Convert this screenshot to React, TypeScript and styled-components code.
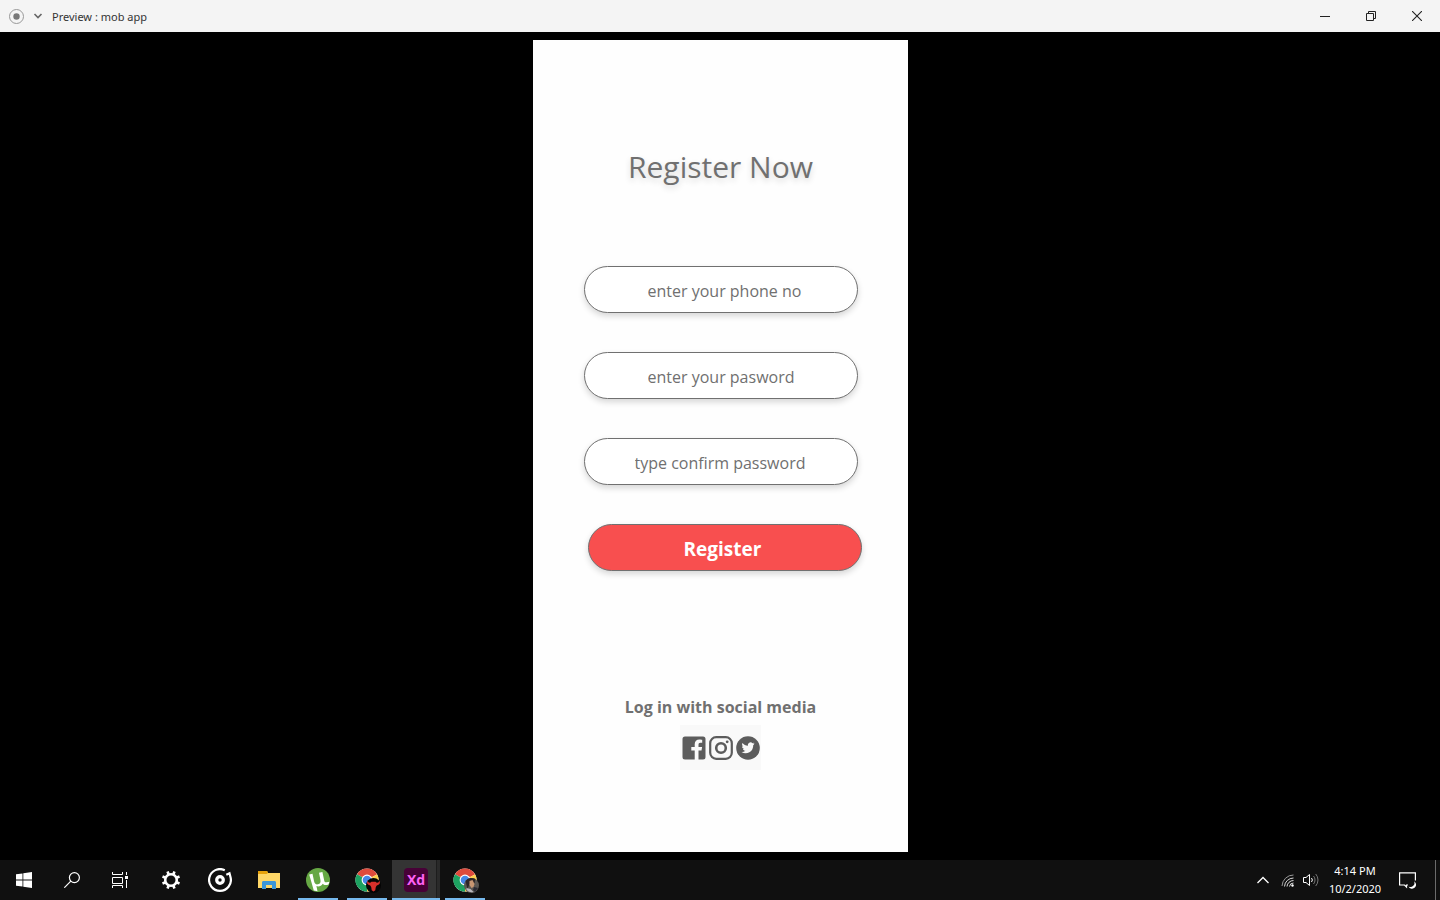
import React from 'react';
import styled, { createGlobalStyle } from 'styled-components';

const GlobalStyle = createGlobalStyle`
  * { box-sizing: border-box; }
  body {
    margin: 0;
    background: #000;
    font-family: "Open Sans", "Noto Sans", sans-serif;
  }
  button, input { font-family: inherit; }
`;

const Desktop = styled.div`
  display: flex;
  flex-direction: column;
  min-height: 100vh;
`;

const TitleBar = styled.header`
  display: flex;
  align-items: center;
  height: 32px;
  padding-left: 8px;
  background: #f4f4f4;
`;

const IconButton = styled.button<{ $width: number }>`
  display: flex;
  align-items: center;
  justify-content: center;
  width: ${(p) => p.$width}px;
  height: 100%;
  padding: 0;
  border: 0;
  background: transparent;
`;

const WindowTitle = styled.span`
  flex: 1;
  padding: 2px 0 0 1px;
  color: #333;
  font-family: "Noto Sans", sans-serif;
  font-size: 11px;
  line-height: 16px;
`;

const Stage = styled.main`
  display: flex;
  flex: 1;
  justify-content: center;
  padding: 8px;
  background: #000;
`;

const Artboard = styled.section`
  display: flex;
  flex-direction: column;
  align-items: center;
  width: 100%;
  max-width: 375px;
  padding: 105px 50px 82px 51px;
  background: #fefefe;
  color: #707070;
`;

const Heading = styled.h1`
  margin: 0;
  font-size: 30px;
  font-weight: 400;
  line-height: 44px;
  text-shadow: 0 3px 6px rgba(0, 0, 0, 0.16);
`;

const Form = styled.form`
  display: flex;
  flex-direction: column;
  gap: 39px;
  width: 100%;
  max-width: 274px;
  margin-top: 77px;
`;

const Field = styled.input<{ $indent: number }>`
  width: 100%;
  height: 47px;
  padding: 2px 16px 0 ${(p) => p.$indent}px;
  border: 1px solid #707070;
  border-radius: 24px;
  background: #fff;
  box-shadow: 0 3px 6px rgba(0, 0, 0, 0.16);
  color: #707070;
  font-size: 16px;
  &::placeholder { color: #707070; opacity: 1; }
`;

const Submit = styled.button`
  width: 100%;
  height: 47px;
  margin-left: 4px;
  padding: 2px 4px 0 0;
  border: 1px solid #707070;
  border-radius: 24px;
  background: #f84f4f;
  box-shadow: 0 3px 6px rgba(0, 0, 0, 0.16);
  color: #fff;
  font-size: 19px;
  font-weight: 700;
`;

const Social = styled.div`
  display: flex;
  flex-direction: column;
  align-items: center;
  gap: 6px;
  margin-top: auto;
`;

const SocialTitle = styled.h2`
  margin: 0;
  font-size: 16px;
  font-weight: 700;
  line-height: 24px;
  white-space: nowrap;
`;

const SocialLinks = styled.nav`
  display: flex;
  align-items: center;
  justify-content: center;
  gap: 3px;
  width: 81px;
  height: 45px;
  background: #f9f9f9;
`;

const SocialLink = styled.a`
  display: flex;
  color: #5c5c5c;
`;

const Taskbar = styled.footer`
  display: flex;
  height: 40px;
  background: #101010;
  color: #fff;
`;

const Pinned = styled.div`
  display: flex;
  gap: 1px;
  margin-left: 3px;
`;

const AppButton = styled.button<{ $state?: 'open' | 'active' }>`
  display: flex;
  align-items: center;
  justify-content: center;
  width: 48px;
  height: 40px;
  padding: 0;
  border: 0;
  background: ${(p) =>
    p.$state === 'active'
      ? 'linear-gradient(#76b9ed, #76b9ed) center bottom / 100% 2px no-repeat, linear-gradient(90deg, #343434 44px, #1d1d1d 44px, #1d1d1d 45px, #2a2a2a 45px)'
      : p.$state === 'open'
        ? 'linear-gradient(#76b9ed, #76b9ed) center bottom / 40px 2px no-repeat'
        : 'transparent'};
`;

const XdLogo = styled.span`
  display: flex;
  align-items: center;
  justify-content: center;
  width: 24px;
  height: 24px;
  border-radius: 4px;
  background: #470137;
  color: #ff61f6;
  font-size: 14px;
  font-weight: 700;
  line-height: 20px;
`;

const Tray = styled.div`
  display: flex;
  align-items: center;
  margin-left: auto;
`;

const Clock = styled.time`
  width: 60px;
  margin-left: 3px;
  font-family: "Noto Sans", sans-serif;
  font-size: 11px;
  line-height: 18px;
  text-align: center;
  white-space: nowrap;
`;

const ShowDesktop = styled.button`
  width: 5px;
  height: 40px;
  margin-left: 6px;
  padding: 0;
  border: 0;
  border-left: 1px solid #6b6b6b;
  background: transparent;
`;

const ChromeLogo = ({ badge }: { badge: 'bull' | 'photo' }) => (
  <svg width="28" height="28" viewBox="-2 -2 28 28">
    <circle cx="12" cy="12" r="11.500" fill="#fff" />
    <path d="M12 12 2 6.200A11.500 11.500 0 0 1 22 6.200Z" fill="#de4b3c" />
    <path d="M12 12 2 6.200A11.500 11.500 0 0 0 12 23.500l5-8.500Z" fill="#1da261" />
    <path d="M12 12 22 6.200A11.500 11.500 0 0 1 12 23.500Z" fill="#fdd04d" />
    <path d="M12 6.200h10L12 10Z" fill="#de4b3c" />
    <circle cx="12" cy="12" r="5.400" fill="#fff" />
    <circle cx="12" cy="12" r="4.300" fill="#4688e8" />
    {badge === 'bull' ? (
      <g>
        <circle cx="18.500" cy="17.500" r="7.500" fill="#050505" />
        <path d="M13 12.500c-.3 1.500.7 2.300 2.200 2.200l1.300-.9h4l1.300.9c1.500.1 2.500-.7 2.200-2.200 1.600 1.600 1 4-1.200 4.500l-1.300.7-.8 1.800-.4 2.700-1.800 1.300-1.800-1.300-.4-2.700-.8-1.800-1.300-.7c-2.200-.5-2.800-2.900-1.200-4.500Z" fill="#d8302b" />
      </g>
    ) : (
      <g>
        <circle cx="18.500" cy="17.500" r="7.500" fill="#5a5652" />
        <path d="M12.500 13a7.500 7.500 0 0 1 10-2l-1 4-5 1-2 5Z" fill="#2d2527" />
        <path d="m16.500 13 3-1 2 4-1 3-2 1-2-3Z" fill="#c79672" />
        <path d="m13.500 20 4 1 3 3a7.500 7.500 0 0 1-7-2Z" fill="#bbb8bd" />
        <path d="m21 19 4 1-3 4-2-2Z" fill="#292933" />
      </g>
    )}
  </svg>
);

export default function App() {
  return (
    <Desktop>
      <GlobalStyle />
      <TitleBar>
        <svg width="17" height="17" viewBox="0 0 17 17">
          <circle cx="8.500" cy="8.500" r="7" fill="none" stroke="#999" />
          <circle cx="8.500" cy="8.500" r="3.200" fill="#777" />
        </svg>
        <IconButton $width={26} aria-label="Preview options">
          <svg width="10" height="8" viewBox="0 0 10 8" fill="none" stroke="#666" strokeWidth="1.600">
            <path d="m1.500 2 3.500 3.500L8.500 2" />
          </svg>
        </IconButton>
        <WindowTitle>Preview : mob app</WindowTitle>
        <IconButton $width={46} aria-label="Minimize">
          <svg width="10" height="10" viewBox="0 0 10 10"><path d="M0 5h10v1H0z" fill="#222" /></svg>
        </IconButton>
        <IconButton $width={46} aria-label="Restore">
          <svg width="10" height="10" viewBox="0 0 10 10" fill="none" stroke="#222">
            <path d="M.5 2.500h7v7h-7zM2.500 2.500v-2h7v7h-2" />
          </svg>
        </IconButton>
        <IconButton $width={46} aria-label="Close">
          <svg width="10" height="10" viewBox="0 0 10 10" stroke="#222" strokeWidth="1.100">
            <path d="m0 0 10 10M10 0 0 10" />
          </svg>
        </IconButton>
      </TitleBar>

      <Stage>
        <Artboard>
          <Heading>Register Now</Heading>
          <Form onSubmit={(e) => e.preventDefault()}>
            <Field type="tel" aria-label="Phone number" placeholder="enter your phone no" $indent={63} />
            <Field type="password" aria-label="Password" placeholder="enter your pasword" $indent={63} />
            <Field type="password" aria-label="Confirm password" placeholder="type confirm password" $indent={50} />
            <Submit type="submit">Register</Submit>
          </Form>
          <Social>
            <SocialTitle>Log in with social media</SocialTitle>
            <SocialLinks aria-label="Social login">
              <SocialLink href="#facebook" aria-label="Facebook">
                <svg width="24" height="24" viewBox="0 0 24 24" fill="currentColor">
                  <path d="M3 0.500h18A2.500 2.500 0 0 1 23.500 3v18a2.500 2.500 0 0 1-2.500 2.500h-4.500v-9h3l.6-3.600h-3.600V8.700c0-1 .5-1.900 2-1.900h1.700V3.700s-1.400-.3-2.800-.3c-2.900 0-4.700 1.700-4.700 4.800v2.700H9.300v3.600h3.400v9H3A2.500 2.500 0 0 1 .5 21V3A2.500 2.500 0 0 1 3 .5Z" />
                </svg>
              </SocialLink>
              <SocialLink href="#instagram" aria-label="Instagram">
                <svg width="24" height="24" viewBox="0 0 24 24" fill="none" stroke="currentColor" strokeWidth="2.200">
                  <rect x="1.200" y="1.200" width="21.600" height="21.600" rx="6" />
                  <circle cx="12" cy="12" r="4.800" strokeWidth="2.600" />
                  <circle cx="18.200" cy="5.800" r="1.400" fill="currentColor" stroke="none" />
                </svg>
              </SocialLink>
              <SocialLink href="#twitter" aria-label="Twitter">
                <svg width="24" height="24" viewBox="0 0 24 24">
                  <circle cx="12" cy="12" r="11.800" fill="currentColor" />
                  <path d="M18.500 7.600c-.5.200-1 .4-1.500.4.600-.3 1-.8 1.200-1.400-.5.300-1.100.5-1.700.6a2.700 2.700 0 0 0-4.600 2.500c-2.200-.1-4.200-1.200-5.500-2.800-.7 1.200-.3 2.800.8 3.600-.4 0-.8-.1-1.200-.3 0 1.300.9 2.400 2.100 2.700-.4.100-.8.100-1.200 0 .4 1.100 1.400 1.800 2.500 1.900A5.400 5.400 0 0 1 5.500 16a7.600 7.600 0 0 0 11.700-6.800c.5-.4 1-.9 1.300-1.600Z" fill="#f9f9f9" />
                </svg>
              </SocialLink>
            </SocialLinks>
          </Social>
        </Artboard>
      </Stage>

      <Taskbar>
        <AppButton aria-label="Start">
          <svg width="16" height="16" viewBox="0 0 16 16" fill="#fff">
            <path d="m0 2.300 6.500-.9v6.200H0zM7.300 1.300 16 0v7.600H7.300zM0 8.400h6.500v6.200L0 13.700zM7.300 8.400H16V16l-8.700-1.300z" />
          </svg>
        </AppButton>
        <AppButton aria-label="Search">
          <svg width="16" height="16" viewBox="0 0 16 16" fill="none" stroke="#fff" strokeWidth="1.200">
            <circle cx="10.400" cy="5.600" r="5" /><path d="m6.800 9.200-6.500 6.500" />
          </svg>
        </AppButton>
        <AppButton aria-label="Task view">
          <svg width="16" height="16" viewBox="0 0 16 16" fill="none" stroke="#fff">
            <path d="M.5 0v2.500h10V0M.5 5.500h10v6H.5zM.5 16v-2.500h10V16M14.500 0v3M14.500 8v8" />
            <path d="M13 4h3v3h-3z" fill="#fff" stroke="none" />
          </svg>
        </AppButton>
        <Pinned>
          <AppButton aria-label="Settings">
            <svg width="20" height="20" viewBox="0 0 20 20" fill="none" stroke="#fff">
              <circle cx="10" cy="10" r="5.800" strokeWidth="2.600" />
              <path d="m12.300 4.500 1.200-3M15.500 7.700l3-1.200M15.500 12.300l3 1.200M12.300 15.500l1.200 3M7.700 15.500l-1.200 3M4.500 12.300l-3 1.200M4.500 7.700l-3-1.200M7.700 4.500l-1.200-3" strokeWidth="2.600" />
            </svg>
          </AppButton>
          <AppButton aria-label="Groove Music">
            <svg width="24" height="24" viewBox="0 0 24 24" fill="none" stroke="#fff">
              <path d="M16.800 2.200a10.900 10.900 0 1 0 5.800 7.300l-1.100-4.300-3.200 1.500" strokeWidth="2.200" />
              <circle cx="12" cy="12" r="3.300" strokeWidth="3.200" />
            </svg>
          </AppButton>
          <AppButton aria-label="File Explorer">
            <svg width="22" height="20" viewBox="0 0 22 20">
              <path d="M0 1h9l1 2h12v15H0z" fill="#ffd767" />
              <path d="M0 1h9l1 1.500L9 4H0z" fill="#e8a30c" />
              <path d="M4 19v-6.500c0-1 .7-1.500 1.500-1.500h11c.8 0 1.500.5 1.500 1.500V19h-4v-4H8v4z" fill="#3c96d8" />
            </svg>
          </AppButton>
          <AppButton $state="open" aria-label="uTorrent">
            <svg width="24" height="24" viewBox="0 0 24 24">
              <circle cx="12" cy="12" r="12" fill="#66a844" />
              <path d="M3.200 6.500 6.500 5.800 8 13c.5 2.700 2 3.700 4 3.300 2.300-.5 2.900-2.100 2.400-4.500L13 4.800l3.400-.7 1.800 8.400c.3 1.500.8 2 2.600 1.700l2.600-.5-.9 2.800c-2.400.8-4.500.9-5.800-.8-1.300 2.400-4 3.300-6.300 2.400l1.100 5.200-3.700-.9Z" fill="#fff" />
            </svg>
          </AppButton>
          <AppButton $state="open" aria-label="Chrome"><ChromeLogo badge="bull" /></AppButton>
          <AppButton $state="active" aria-label="Adobe XD"><XdLogo>Xd</XdLogo></AppButton>
          <AppButton $state="open" aria-label="Chrome, second profile"><ChromeLogo badge="photo" /></AppButton>
        </Pinned>
        <Tray>
          <IconButton $width={26} aria-label="Show hidden icons">
            <svg width="12" height="8" viewBox="0 0 12 8" fill="none" stroke="#fff" strokeWidth="1.300"><path d="m.5 7 5.500-5.500L11.500 7" /></svg>
          </IconButton>
          <IconButton $width={24} aria-label="Network">
            <svg width="14" height="14" viewBox="0 0 14 14" fill="none" stroke="#ddd">
              <path d="M1 13A11.500 11.500 0 0 1 12.500 2" stroke="#999" />
              <path d="M3.500 13.500A9 9 0 0 1 12.500 5M6 13.500A6.500 6.500 0 0 1 12.500 7.500M8.500 13.500a4 4 0 0 1 4-3.500" />
              <circle cx="11.500" cy="12.500" r="1.200" fill="#fff" stroke="none" />
            </svg>
          </IconButton>
          <IconButton $width={22} aria-label="Volume">
            <svg width="16" height="14" viewBox="0 0 16 14" fill="none" stroke="#fff">
              <path d="M.5 4.500H3l3.500-3v11L3 9.500H.5zM8.500 5a3 3 0 0 1 0 4" />
              <path d="M10.500 3a6 6 0 0 1 0 8M12.700 1a9 9 0 0 1 0 12" stroke="#777" />
            </svg>
          </IconButton>
          <Clock dateTime="2020-10-02T16:14">4:14 PM<br />10/2/2020</Clock>
          <IconButton $width={44} aria-label="Notifications">
            <svg width="17" height="17" viewBox="0 0 17 17" fill="none" stroke="#fff" strokeWidth="1.200">
              <path d="M9 13H7.500v2L5.500 13H.6V.8h15.800v7.700" />
              <path d="M15 9.200a4 4 0 0 1-5.500 5.300 4 4 0 1 0 5.500-5.300Z" fill="#fff" stroke="none" />
            </svg>
          </IconButton>
          <ShowDesktop aria-label="Show desktop" />
        </Tray>
      </Taskbar>
    </Desktop>
  );
}
